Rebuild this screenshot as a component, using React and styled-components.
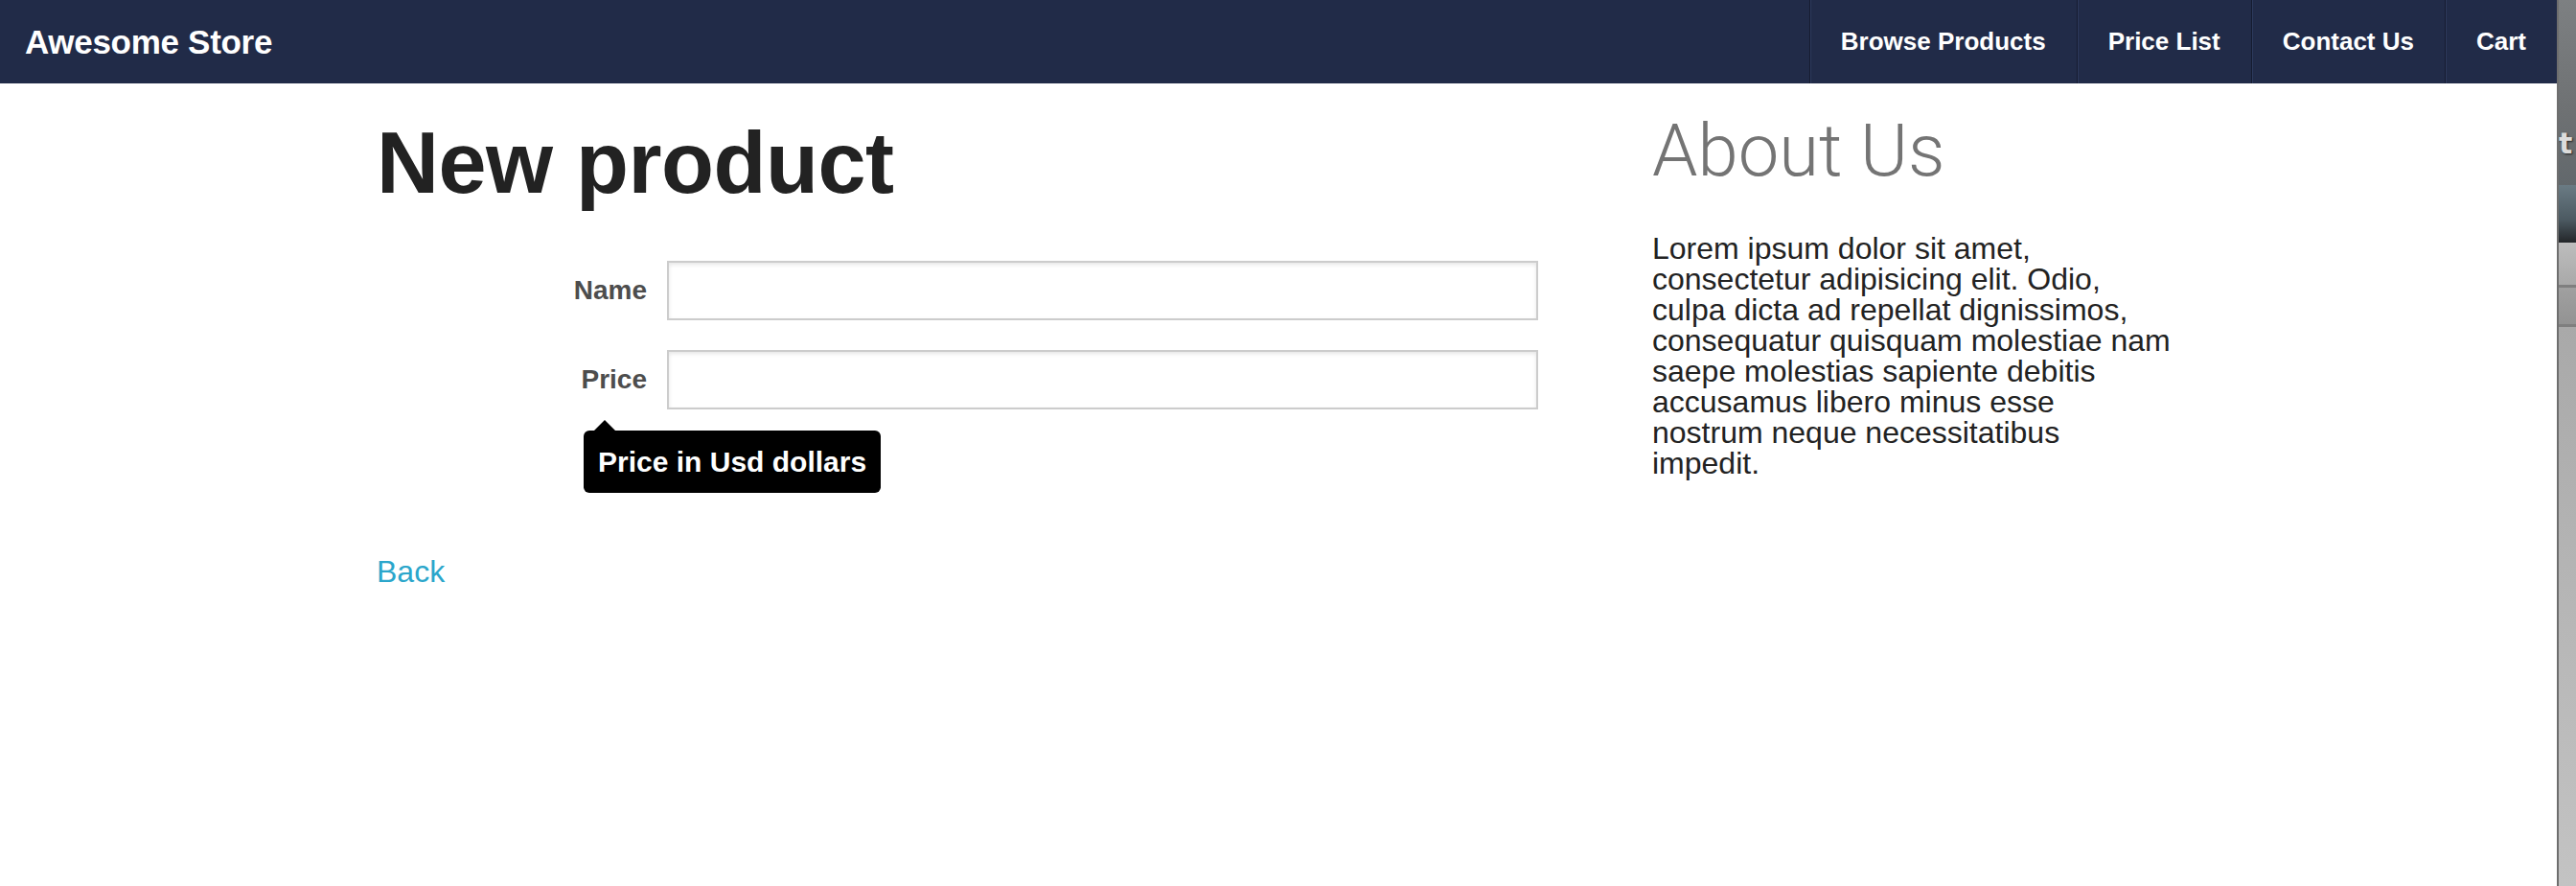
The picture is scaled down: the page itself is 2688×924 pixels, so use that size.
import React from "react";
import styled, { createGlobalStyle } from "styled-components";

const navLinks = ["Browse Products", "Price List", "Contact Us", "Cart"];

const aboutLines = [
  "Lorem ipsum dolor sit amet,",
  "consectetur adipisicing elit. Odio,",
  "culpa dicta ad repellat dignissimos,",
  "consequatur quisquam molestiae nam",
  "saepe molestias sapiente debitis",
  "accusamus libero minus esse",
  "nostrum neque necessitatibus",
  "impedit.",
];

function App() {
  return (
    <Screen>
      <GlobalStyle />
      <Page>
        <TopBar>
          <Brand>Awesome Store</Brand>
          <NavList>
            {navLinks.map((link) => (
              <NavItem key={link}>{link}</NavItem>
            ))}
          </NavList>
        </TopBar>
        <Row>
          <MainColumn>
            <Title>New product</Title>
            <Form>
              <FieldLabel htmlFor="name">Name</FieldLabel>
              <TextInput id="name" type="text" />
              <FieldLabel htmlFor="price">Price</FieldLabel>
              <TextInput id="price" type="text" />
              <Tooltip>Price in Usd dollars</Tooltip>
            </Form>
            <BackLink href="#">Back</BackLink>
          </MainColumn>
          <Sidebar>
            <SideTitle>About Us</SideTitle>
            <SideText>
              {aboutLines.map((line, i) => (
                <React.Fragment key={i}>
                  {line}
                  {i < aboutLines.length - 1 && <br />}
                </React.Fragment>
              ))}
            </SideText>
          </Sidebar>
        </Row>
      </Page>
      <DesktopEdge>
        <EdgeTop>
          <EdgeGlyph>t</EdgeGlyph>
        </EdgeTop>
        <EdgePhoto />
        <EdgeBar height={47} />
        <EdgeBar height={41} dark />
        <EdgeRest />
      </DesktopEdge>
    </Screen>
  );
}

const GlobalStyle = createGlobalStyle`
  html, body {
    margin: 0;
    padding: 0;
    background: #fff;
  }
  body {
    font-family: "Liberation Sans", Arial, Helvetica, sans-serif;
    overflow: hidden;
  }
`;

const Screen = styled.div`
  display: flex;
  width: 2688px;
  height: 924px;
`;

const Page = styled.div`
  flex: 1;
  display: flex;
  flex-direction: column;
  background: #fff;
`;

const TopBar = styled.div`
  display: flex;
  justify-content: space-between;
  align-items: stretch;
  height: 87px;
  background-color: #212b48;
`;

const Brand = styled.div`
  padding-left: 26px;
  line-height: 87px;
  font-size: 35px;
  font-weight: 700;
  color: #fff;
  letter-spacing: -0.3px;
`;

const NavList = styled.div`
  display: flex;
`;

const NavItem = styled.a`
  display: flex;
  align-items: center;
  padding: 0 32px;
  font-size: 26px;
  font-weight: 700;
  color: #fff;
  text-decoration: none;
  border-left: 1px solid #151b2f;
  box-shadow: inset 1px 0 0 #2d3a5d;
`;

const Row = styled.div`
  display: grid;
  grid-template-columns: 1331px 669px;
  width: 2000px;
  margin-left: 363px;
`;

const MainColumn = styled.div`
  padding: 0 30px;
`;

const Title = styled.h1`
  margin: 34px 0 0;
  font-size: 90px;
  line-height: 99px;
  font-weight: 700;
  color: #222;
  letter-spacing: -0.5px;
`;

const Form = styled.form`
  position: relative;
  display: grid;
  grid-template-columns: 282px 909px;
  column-gap: 21px;
  row-gap: 31px;
  align-items: center;
  margin-top: 52px;
`;

const FieldLabel = styled.label`
  text-align: right;
  font-size: 28px;
  font-weight: 700;
  color: #4d4d4d;
`;

const TextInput = styled.input`
  box-sizing: border-box;
  height: 62px;
  margin: 0;
  border: 2px solid #cccccc;
  background: #fff;
  box-shadow: inset 0 2px 4px rgba(0, 0, 0, 0.1);
  font-size: 28px;
  outline: none;
`;

const Tooltip = styled.span`
  position: absolute;
  top: 177px;
  left: 216px;
  padding: 13px 15px;
  border-radius: 6px;
  background: #000;
  color: #fff;
  font-size: 30px;
  font-weight: 700;
  line-height: 39px;
  white-space: nowrap;

  &::before {
    content: "";
    position: absolute;
    top: -11px;
    left: 11px;
    border-style: solid;
    border-width: 0 11px 11px;
    border-color: transparent transparent #000;
  }
`;

const BackLink = styled.a`
  display: inline-block;
  margin-top: 151px;
  font-size: 32px;
  line-height: 37px;
  color: #2ba6cb;
  text-decoration: none;
`;

const Sidebar = styled.div`
  padding: 0 30px;
`;

const SideTitle = styled.h2`
  margin: 28px 0 0;
  font-family: Roboto, "Liberation Sans", sans-serif;
  font-size: 76px;
  line-height: 84px;
  font-weight: 300;
  color: #747474;
`;

const SideText = styled.p`
  margin: 44px 0 0;
  font-size: 32px;
  line-height: 32px;
  color: #222;
`;

const DesktopEdge = styled.div`
  display: flex;
  flex-direction: column;
  width: 20px;
  border-left: 2px solid #6e6e6e;
  box-sizing: border-box;
  overflow: hidden;
`;

const EdgeTop = styled.div`
  position: relative;
  height: 193px;
  background: linear-gradient(#7d8082, #6e7173 60%, #62686c);
`;

const EdgeGlyph = styled.span`
  position: absolute;
  top: 132px;
  left: 0;
  font-family: "DejaVu Sans", sans-serif;
  font-size: 30px;
  font-weight: 700;
  color: #dcdcdc;
  text-shadow: 1px 1px 2px #222;
`;

const EdgePhoto = styled.div`
  height: 60px;
  background: linear-gradient(#6a7b84, #4c5a62 60%, #232629);
`;

const EdgeBar = styled.div`
  height: ${(p) => p.height}px;
  box-sizing: border-box;
  background: ${(p) => (p.dark ? "linear-gradient(#a0a0a0, #939393)" : "linear-gradient(#bdbdbd, #a9a9a9)")};
  border-bottom: 3px solid #7f7f7f;
`;

const EdgeRest = styled.div`
  flex: 1;
  background: linear-gradient(#a9a9a9, #c3c3c3);
`;

export default App;
